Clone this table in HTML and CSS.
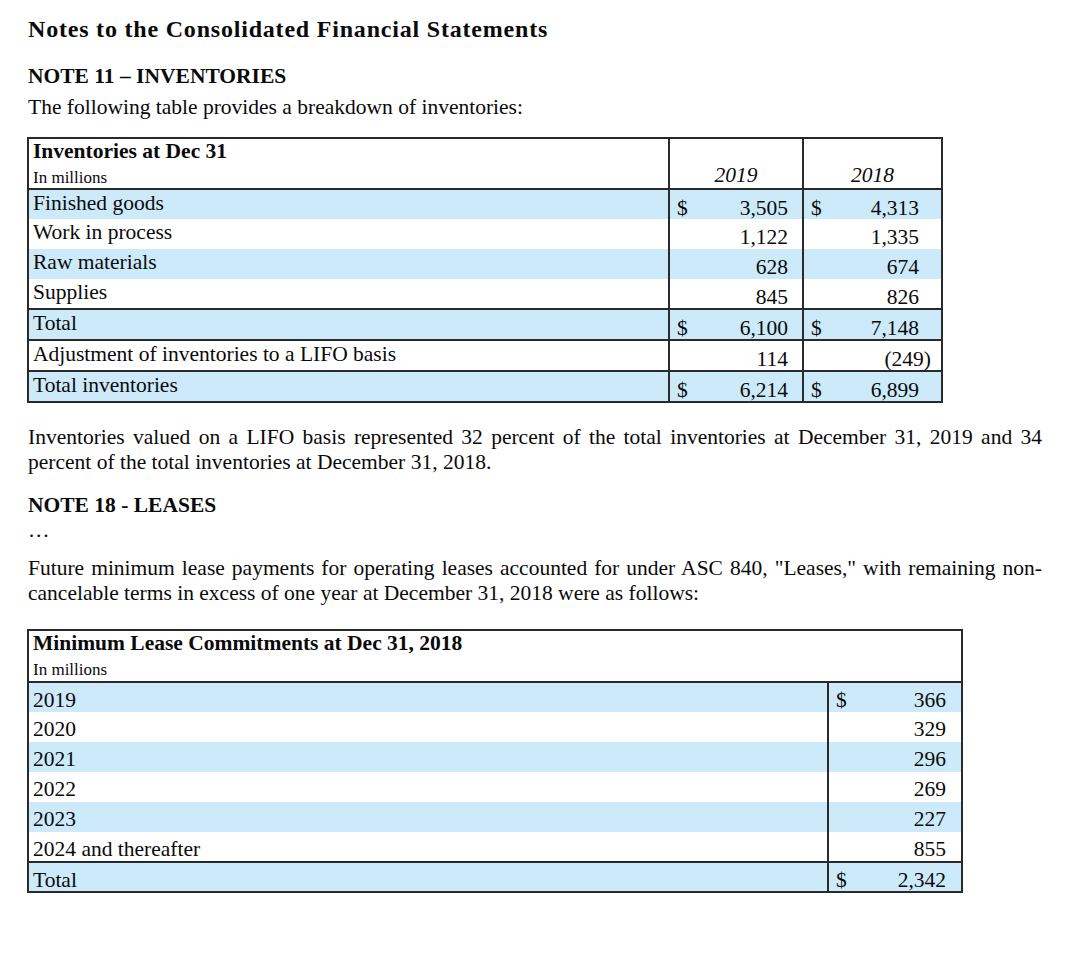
FILE: index.html
```html
<!DOCTYPE html>
<html>
<head>
<meta charset="utf-8">
<link rel="stylesheet" href="styles.css">
</head>
<body>
<div class="page">
  <h1 class="title">Notes to the Consolidated Financial Statements</h1>
  <h2 class="note first">NOTE 11 – INVENTORIES</h2>
  <p class="intro">The following table provides a breakdown of inventories:</p>

  <table class="fin inv">
    <colgroup><col class="c-label"><col class="c-y1"><col class="c-y2"></colgroup>
    <thead>
      <tr class="head">
        <th class="hlabel"><div class="htitle">Inventories at Dec 31</div><div class="hunit">In millions</div></th>
        <th class="year">2019</th>
        <th class="year">2018</th>
      </tr>
    </thead>
    <tbody>
      <tr class="blue"><td class="lbl">Finished goods</td><td class="val v1"><span class="cur">$</span><span class="num">3,505</span></td><td class="val v2"><span class="cur">$</span><span class="num">4,313</span></td></tr>
      <tr><td class="lbl">Work in process</td><td class="val v1"><span class="cur"></span><span class="num">1,122</span></td><td class="val v2"><span class="cur"></span><span class="num">1,335</span></td></tr>
      <tr class="blue"><td class="lbl">Raw materials</td><td class="val v1"><span class="cur"></span><span class="num">628</span></td><td class="val v2"><span class="cur"></span><span class="num">674</span></td></tr>
      <tr><td class="lbl">Supplies</td><td class="val v1"><span class="cur"></span><span class="num">845</span></td><td class="val v2"><span class="cur"></span><span class="num">826</span></td></tr>
      <tr class="blue rule"><td class="lbl">Total</td><td class="val v1"><span class="cur">$</span><span class="num">6,100</span></td><td class="val v2"><span class="cur">$</span><span class="num">7,148</span></td></tr>
      <tr class="rule"><td class="lbl">Adjustment of inventories to a LIFO basis</td><td class="val v1"><span class="cur"></span><span class="num">114</span></td><td class="val v2"><span class="cur"></span><span class="num">(249<span class="par">)</span></span></td></tr>
      <tr class="blue rule"><td class="lbl">Total inventories</td><td class="val v1"><span class="cur">$</span><span class="num">6,214</span></td><td class="val v2"><span class="cur">$</span><span class="num">6,899</span></td></tr>
    </tbody>
  </table>

  <p class="body lifo">Inventories valued on a LIFO basis represented 32 percent of the total inventories at December 31, 2019 and 34 percent of the total inventories at December 31, 2018.</p>

  <h2 class="note second">NOTE 18 - LEASES</h2>
  <p class="ellipsis">…</p>
  <p class="body future">Future minimum lease payments for operating leases accounted for under ASC 840, "Leases," with remaining non-cancelable terms in excess of one year at December 31, 2018 were as follows:</p>

  <table class="fin lease">
    <colgroup><col class="c-label2"><col class="c-val2"></colgroup>
    <thead>
      <tr class="head">
        <th class="hlabel" colspan="2"><div class="htitle">Minimum Lease Commitments at Dec 31, 2018</div><div class="hunit">In millions</div></th>
      </tr>
    </thead>
    <tbody>
      <tr class="blue"><td class="lbl">2019</td><td class="val v3"><span class="cur">$</span><span class="num">366</span></td></tr>
      <tr><td class="lbl">2020</td><td class="val v3"><span class="cur"></span><span class="num">329</span></td></tr>
      <tr class="blue"><td class="lbl">2021</td><td class="val v3"><span class="cur"></span><span class="num">296</span></td></tr>
      <tr><td class="lbl">2022</td><td class="val v3"><span class="cur"></span><span class="num">269</span></td></tr>
      <tr class="blue"><td class="lbl">2023</td><td class="val v3"><span class="cur"></span><span class="num">227</span></td></tr>
      <tr><td class="lbl">2024 and thereafter</td><td class="val v3"><span class="cur"></span><span class="num">855</span></td></tr>
      <tr class="blue rule"><td class="lbl">Total</td><td class="val v3"><span class="cur">$</span><span class="num">2,342</span></td></tr>
    </tbody>
  </table>
</div>
</body>
</html>
```

FILE: styles.css
```css
html, body {
  margin: 0;
  padding: 0;
  background: #ffffff;
}

body {
  font-family: "Liberation Serif", "Times New Roman", serif;
  color: #0a0a0a;
}

.page {
  padding: 15px 42px 40px 27px;
}

.title {
  font-size: 24px;
  letter-spacing: 0.8px;
  line-height: 28px;
  font-weight: bold;
  margin: 0 0 0 1px;
}

.note {
  font-size: 21.5px;
  line-height: 26px;
  font-weight: bold;
  margin: 0 0 0 1px;
}

.note.first {
  margin-top: 20px;
}

.intro {
  font-size: 21.5px;
  line-height: 25px;
  margin: 6px 0 17px 1px;
}

.body {
  font-size: 21.5px;
  line-height: 25px;
  text-align: justify;
  margin: 0 0 0 1px;
}

.lifo {
  margin-top: 22px;
}

.note.second {
  margin-top: 17px;
}

.ellipsis {
  font-size: 21.5px;
  line-height: 25px;
  margin: 0 0 0 1px;
}

.future {
  margin-top: 13px;
}

/* tables */
.fin {
  border-collapse: collapse;
  table-layout: fixed;
  border: 2px solid #2a2a2a;
}

.inv {
  width: 916px;
}

.lease {
  width: 936px;
  margin-top: 23px;
}

.c-y1 { width: 134px; }
.c-y2 { width: 139px; }
.c-val2 { width: 134px; }

.fin th,
.fin td {
  padding: 0;
  vertical-align: top;
}

.head th {
  border-bottom: 2px solid #2a2a2a;
  font-weight: normal;
  height: 48px;
  text-align: left;
}

.lease .head th {
  height: 50px;
}

.hlabel {
  padding-left: 4px !important;
}

.htitle {
  font-size: 21.5px;
  font-weight: bold;
  line-height: 24px;
}

.hunit {
  font-size: 17px;
  line-height: 20px;
  margin-top: 5px;
}

.year {
  font-size: 21.5px;
  font-style: italic;
  text-align: center !important;
  vertical-align: bottom !important;
  line-height: 24px;
  padding-bottom: 1px !important;
  border-left: 2px solid #2a2a2a;
}

.fin tbody tr {
  height: 30px;
}

.fin tbody td {
  font-size: 21.5px;
  line-height: 22px;
}

.fin tr.rule td {
  border-top: 2px solid #2a2a2a;
}

.fin tr.blue td {
  background: #cdeafa;
}

.lbl {
  padding: 2px 0 0 4px !important;
  white-space: nowrap;
}

.lease .lbl {
  padding-top: 6px !important;
}

.val {
  border-left: 2px solid #2a2a2a;
  padding-top: 7px !important;
  white-space: nowrap;
}

.lease .val {
  padding-top: 6px !important;
}

.val .cur,
.val .num {
  display: inline-block;
}

.val .cur {
  float: left;
  padding-left: 7px;
}

.val .num {
  float: right;
}

.v1 .num { margin-right: 14px; }
.v2 .num { margin-right: 22px; }
.v3 .num { margin-right: 15px; }

.par {
  margin-right: -12px;
}
```
